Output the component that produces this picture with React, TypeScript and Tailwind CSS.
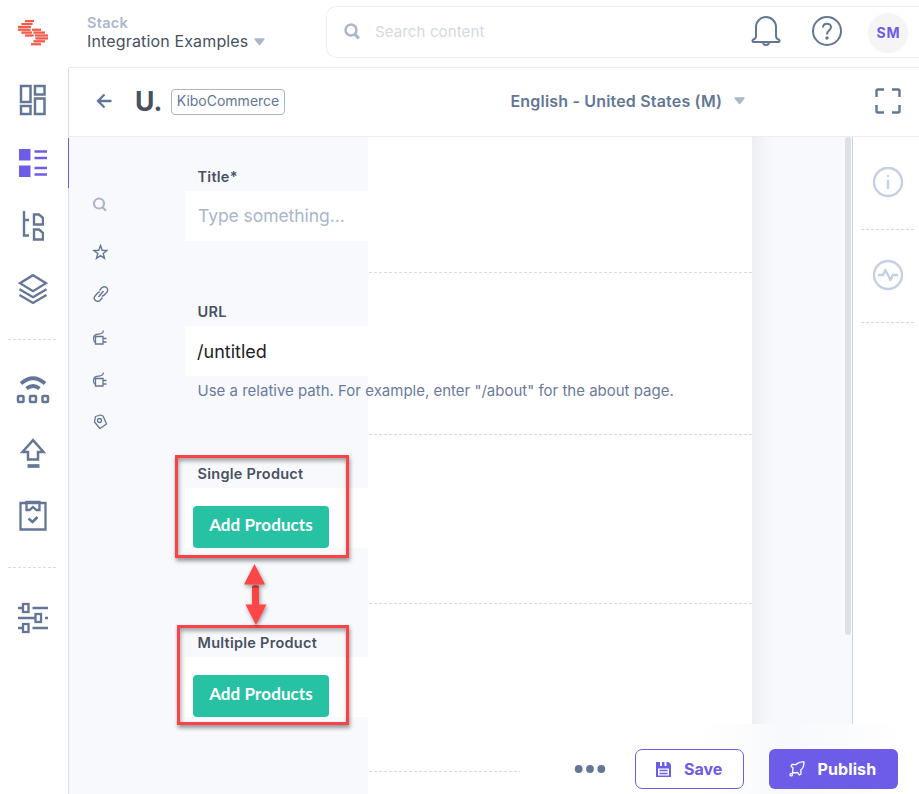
import React from 'react';

type IconProps = { w: number; h: number; className?: string; children: React.ReactNode; sw?: number };

function Icon({ w, h, className = '', children, sw = 2 }: IconProps) {
  return (
    <svg
      width={w}
      height={h}
      viewBox={`0 0 ${w} ${h}`}
      fill="none"
      stroke="currentColor"
      strokeWidth={sw}
      className={`shrink-0 ${className}`}
    >
      {children}
    </svg>
  );
}

function Logo() {
  const bars: [number, number, number][] = [
    [7, 16, 0], [3.5, 14.5, 3], [0, 13, 6], [0, 12.5, 8.8], [14, 23, 8.8], [3.5, 14, 11.6], [15.5, 27, 11.6],
    [7, 15.500, 14.5], [17, 30, 14.5], [17.500, 30, 17.4], [15.500, 27, 20.3], [13, 23, 23.2],
  ];
  return (
    <svg width="31" height="27" viewBox="0 0 31 27" className="shrink-0">
      {bars.map(([a, b, y]) => (
        <g key={`${a}-${y}`} fill="#f0503f">
          <rect x={a} y={y - 0.3} width={b - a} height="2.700" opacity="0.35" />
          <rect x={a} y={y} width={b - a} height="2" opacity="0.9" />
        </g>
      ))}
    </svg>
  );
}

function Caret({ className = '' }: { className?: string }) {
  return (
    <svg width="11" height="8" viewBox="0 0 11 8" className={className}>
      <path d="M1.2 1h8.6L5.500 6.500z" fill="#a9b6cb" stroke="#a9b6cb" strokeWidth="1.600" strokeLinejoin="round" />
    </svg>
  );
}

function Dashes({ className = '' }: { className?: string }) {
  return (
    <div
      className={`h-px shrink-0 bg-[repeating-linear-gradient(90deg,#d9dadf_0_3px,transparent_3px_5px)] ${className}`}
    />
  );
}

function Sidebar() {
  return (
    <nav className="flex h-full w-[68px] shrink-0 flex-col items-center pr-[2px] text-[#647696]">
      <div className="mt-[19.600px] h-[26.400px]"><Logo /></div>
      <Icon w={28} h={32} sw={2.500} className="mt-[38px]">
        <rect x="2" y="2" width="9.500" height="16" />
        <rect x="16" y="2" width="9.500" height="8.500" />
        <rect x="2" y="22" width="9.500" height="8" />
        <rect x="16" y="14.500" width="9.500" height="15.500" />
      </Icon>
      <Icon w={28} h={28} className="mt-[33px] text-[#6c5ce7]">
        <path d="M0 0h11.500v11.500H0zM0 16.500h11.500V28H0z" fill="currentColor" stroke="none" />
        <path d="M15.500 2.500H28M15.500 9H28M15.500 19H28M15.500 25.500H28" strokeWidth="2.300" />
      </Icon>
      <Icon w={22} h={32} sw={2.400} className="mt-[33px]">
        <path d="M2 1v24.500h5M2 10h5" />
        <path d="M12 4.500h5l4 3.500v6.500h-9zM12 19.500h5l4 3.500v6.500h-9z" />
      </Icon>
      <Icon w={30} h={32} sw={2.300} className="mt-[31px]">
        <path d="M15 2.200l13 8-13 8-13-8zM1.500 16.200L15 24.200l13.500-8M1.500 22L15 30l13.500-8" />
      </Icon>
      <Dashes className="mt-[34px] w-[50px]" />
      <Icon w={34} h={30} sw={2.500} className="mt-[35px]">
        <path d="M5 8.500Q17-2 29 8.500" strokeWidth="3.700" />
        <path d="M10.500 13.500Q17 8.500 23.500 13.500" strokeWidth="3.700" />
        <rect x="2" y="21" width="5.500" height="6" rx="1" />
        <rect x="14" y="21" width="6" height="6" rx="1" />
        <rect x="26.500" y="21" width="5.500" height="6" rx="1" />
      </Icon>
      <Icon w={26} h={30} sw={2.500} className="mt-[33px]">
        <path d="M13 2.200L23.500 14H18v7.500H8V14H2.500z" />
        <path d="M7.500 28h12" strokeWidth="3.700" />
      </Icon>
      <Icon w={28} h={32} sw={2.300} className="mt-[32px]">
        <path d="M1.500 3h25v26.500h-25z" />
        <path d="M7.500 2h13v8h-3l-3.500-3-3.500 3h-3z" />
        <path d="M9.500 18.500l4 3.500 5-5" strokeWidth="2.600" />
      </Icon>
      <Dashes className="mt-[35px] w-[50px]" />
      <Icon w={30} h={32} sw={2.300} className="mt-[34px]">
        <path d="M0 6h4M14.500 6H30M0 16h17M27 16h3M0 26h4M14.500 26H30" />
        <rect x="5" y="2" width="5.500" height="8" />
        <rect x="17.500" y="12" width="5.500" height="8" />
        <rect x="5" y="22" width="5.500" height="8" />
      </Icon>
    </nav>
  );
}

function TopBar() {
  return (
    <header className="flex h-[67px] shrink-0 pl-[19px]">
      <div className="w-[239px] pt-[14px]">
        <div className="text-[14.5px] leading-[18px] font-semibold tracking-[0.3px] text-[#a9b6d0]">Stack</div>
        <div className="flex items-center gap-[6px] leading-[19px]">
          <span className="text-[16px] tracking-[0.15px] text-[#475161]">Integration Examples</span>
          <Caret />
        </div>
      </div>
      <div className="mt-[6px] flex h-[52px] flex-1 items-center rounded-l-[10px] border border-r-0 border-[#edf0f9] pl-[17px]">
        <Icon w={16} h={17} sw={2.500} className="mb-px text-[#a9b6cb]">
          <circle cx="7" cy="7" r="5.500" />
          <path d="M10.800 11l4 4.500" strokeWidth="3" />
        </Icon>
        <span className="ml-[15px] w-[376px] text-[15px] tracking-[0.13px] text-[#d4d9e1]">Search content</span>
        <Icon w={30} h={32} className="text-[#647696]">
          <path d="M5 20V11a10 10 0 0 1 20 0v9c0 2 1 3 2.500 3.500 1.500.7 1.500 2.500-.5 2.500H3c-2 0-2-1.800-.5-2.500C4 23 5 22 5 20z" />
          <path d="M12 26c0 4 6 4 6 0" />
        </Icon>
        <Icon w={32} h={32} className="mb-[2px] ml-[30px] text-[#647696]">
          <circle cx="16" cy="16" r="14" />
          <path d="M12 12.500c0-5 8-5 8-.5 0 3.500-4 3-4 7.500" />
          <circle cx="16" cy="23" r="1.700" fill="currentColor" stroke="none" />
        </Icon>
        <div className="mt-[2px] ml-[25px] flex size-10 shrink-0 items-center justify-center rounded-full bg-[#f5f5f5] pb-[2px] pl-px text-[14px] font-bold tracking-[0.8px] text-[#6c5ce7]">
          SM
        </div>
      </div>
    </header>
  );
}

function EntryBar() {
  return (
    <div className="flex h-[69px] shrink-0 items-center border-b border-[#eaedf6] pb-[2px] pl-[27px]">
      <Icon w={16} h={16} sw={2.300} className="text-[#647696]">
        <path d="M8.500 1.500L2 8l6.500 6.500M2 8h13.500" />
      </Icon>
      <span className="mt-[2px] ml-[23px] w-[36px] text-[26.5px] font-bold text-[#475161]">U.</span>
      <span className="mt-px flex h-[26px] w-[114px] shrink-0 items-center justify-center rounded-[4px] border border-[#a9b6cb] pb-[2px] text-[14px] text-[#647696]">
        KiboCommerce
      </span>
      <span className="ml-[225.500px] w-[223.500px] text-[16px] font-semibold tracking-[0.18px] whitespace-nowrap text-[#647696]">
        English - United States (M)
      </span>
      <Caret />
      <Icon w={26} h={26} sw={2.400} className="ml-[130px] text-[#647696]">
        <path d="M1.500 9V3q0-1.500 1.500-1.500h6M17 1.500h6q1.500 0 1.500 1.500v6M24.500 17v6q0 1.500-1.500 1.500h-6M9 24.500H3q-1.500 0-1.500-1.500v-6" />
      </Icon>
    </div>
  );
}

function Plug({ className }: { className: string }) {
  return (
    <Icon w={16} h={16} sw={1.300} className={className}>
      <path d="M3.500 6.500h7.500v7.500H3.500zM11 8.500h3.500M11 12h3.500M3.500 13C.5 11 1 5.500 4 4.500c3-.8 7 .5 7.500-4" />
    </Icon>
  );
}

function FieldRail() {
  return (
    <div className="flex w-[116px] shrink-0 flex-col pl-[23px] text-[#647696]">
      <Icon w={15} h={15} sw={2.200} className="mt-[60px] text-[#a9b6cb]">
        <circle cx="7" cy="6.500" r="5" />
        <path d="M10.500 10.200l3.500 3.500" />
      </Icon>
      <Icon w={16} h={16} sw={1.400} className="mt-[32px]">
        <path d="M8.500 1.500l1.700 4.800 4.800.2-3.800 3 1.300 4.800-4-2.700-4 2.700 1.300-4.800-3.800-3 4.800-.2z" />
      </Icon>
      <Icon w={18} h={18} sw={1.400} className="mt-[25px]">
        <path d="M7.500 5.500l2.300-2.700a3.300 3.300 0 0 1 5 4.500L12.300 10a3 3 0 0 1-2.600 1M10.500 12.500l-2.300 2.700a3.300 3.300 0 0 1-5-4.500L5.700 8a3 3 0 0 1 2-1M6.500 12l5-6" />
      </Icon>
      <Plug className="mt-[27px]" />
      <Plug className="mt-[26px]" />
      <Icon w={16} h={16} sw={1.300} className="mt-[26px] ml-px">
        <path d="M2.500 2.500l5-1.500 2.500 1 3.500 8-6.500 4.500L1.500 8z" strokeLinejoin="round" />
        <circle cx="6.500" cy="6.500" r="2" />
      </Icon>
    </div>
  );
}

function Field({
  label, top, height, boxHeight, boxClass = '', note, children,
}: {
  label: string; top: string; height: string; boxHeight: string; boxClass?: string; note?: string; children: React.ReactNode;
}) {
  return (
    <div className={`flex shrink-0 ${height}`}>
      <div className={`w-[183px] shrink-0 ${top}`}>
        <div className="h-[26px] pl-[12.500px] text-[14.5px] leading-[23px] font-semibold tracking-[0.26px] text-[#475161]">{label}</div>
        <div className={`bg-white ${boxHeight} ${boxClass}`}>{children}</div>
        {note && (
          <div className="relative z-10 mt-[5px] pl-[12.500px] text-[15px] leading-[20px] whitespace-nowrap text-[#6b7b9d]">{note}</div>
        )}
      </div>
      <div className="flex flex-1 items-end bg-white pl-px"><Dashes className="w-full" /></div>
    </div>
  );
}

function AddButton() {
  return (
    <button className="h-[42px] w-[136px] rounded-[4px] bg-[#27c2a4] pb-[4px] font-[Lato,sans-serif] text-[17px] font-bold tracking-[0.1px] text-white">
      Add Products
    </button>
  );
}

function Editor() {
  return (
    <div className="flex w-[783px] shrink-0 overflow-hidden bg-[#f7f9fd]">
      <FieldRail />
      <div className="flex w-[567px] shrink-0 flex-col">
        <Field label="Title*" top="pt-[28px]" height="h-[136px]" boxHeight="h-[50px]" boxClass="flex items-center pl-[13px] text-[17.5px] tracking-[-0.06px] text-[#a9b6cb]">
          Type something...
        </Field>
        <Field label="URL" top="pt-[27px]" height="h-[162px]" boxHeight="h-[50px]" boxClass="flex items-center pl-[12px] pt-px text-[18px] text-[#222222]"
          note={'Use a relative path. For example, enter "/about" for the about page.'}>
          /untitled
        </Field>
        <Field label="Single Product" top="pt-[27px]" height="h-[169px]" boxHeight="h-[60px]" boxClass="pl-2 pt-[18px]"><AddButton /></Field>
        <Field label="Multiple Product" top="pt-[27px]" height="h-[168px]" boxHeight="h-[60px]" boxClass="pl-2 pt-[18px]"><AddButton /></Field>
        <div className="flex-1 pl-[183px]"><div className="h-full bg-white" /></div>
      </div>
      <div className="flex flex-1 justify-between bg-linear-to-r from-[#edeff3] via-[#f7f9fd] via-20% to-[#f7f9fd] pr-px">
        <div />
        <div className="h-[498px] w-[6px] rounded-full bg-[#dde0e7]" />
      </div>
    </div>
  );
}

function InfoPanel() {
  return (
    <aside className="flex flex-1 flex-col items-center border-l border-[#cbd3e2] text-[#c3cfe2]">
      <Icon w={32} h={32} sw={2.300} className="mt-[29px] ml-[4px]">
        <circle cx="16" cy="16" r="14" />
        <path d="M16 14v9M16 9v2" />
      </Icon>
      <Dashes className="mt-[31px] ml-[5px] w-[55px]" />
      <Icon w={32} h={32} sw={2.300} className="mt-[29px] ml-[4px]">
        <circle cx="16" cy="16" r="14" />
        <path d="M6 16h5l2.500-5 5 10 2.500-5h5" strokeLinejoin="round" />
      </Icon>
      <Dashes className="mt-[31px] ml-[5px] w-[55px]" />
    </aside>
  );
}

function Actions() {
  return (
    <div className="absolute right-0 bottom-0 z-20 flex h-[70px] w-[399px] bg-white bg-[linear-gradient(90deg,#ffffff_45%,#f8f9fc_66%,#fafbfd_80%,#ffffff_96%)] pt-[25px] pl-[54px]">
      <svg width="32" height="40" viewBox="0 0 32 40" fill="#647696" className="shrink-0">
        <circle cx="4.700" cy="20" r="3.900" />
        <circle cx="16" cy="20" r="3.900" />
        <circle cx="27.300" cy="20" r="3.900" />
      </svg>
      <button className="ml-[29px] flex h-10 w-[109px] shrink-0 items-center rounded-[7px] border border-[#6c5ce7] bg-white pl-[20px] text-[16px] font-bold text-[#6c5ce7]">
        <svg width="15" height="15" viewBox="0 0 15 15" className="mr-[13px]">
          <path d="M0 0h12.500L15 2.500V15H0z" fill="#6c5ce7" />
          <path d="M4 0h2v4H4zM8.500 0h2v4h-2z" fill="#fff" />
          <path d="M2 6.500h11v7H2z" fill="#fff" />
          <path d="M3.500 8.500h8M3.500 11.500h8" stroke="#6c5ce7" strokeWidth="1.300" />
        </svg>
        Save
      </button>
      <button className="ml-[25px] flex h-10 w-[129px] shrink-0 items-center rounded-[6px] bg-[#6c5ce7] pl-[20px] text-[16px] font-bold text-white">
        <Icon w={16} h={16} sw={1.300} className="mr-[12.500px]">
          <path d="M15 1c-4-.3-6.500.7-8.300 2.700L3 3.300 2 5l2 2-.5 5 5-.5 2 2.500 1.500-1-.2-4C14 7.500 15 5 15 1z" strokeLinejoin="round" />
          <circle cx="2.200" cy="13.700" r="1.200" />
        </Icon>
        <span className="tracking-[0.1px]">Publish</span>
      </button>
    </div>
  );
}

function Annotations() {
  return (
    <>
      <div className="absolute top-[455px] left-[175px] z-20 h-[103px] w-[174px] border-[3px] border-[#f94344] shadow-[1px_3px_4px_rgba(0,0,0,0.4),inset_1px_3px_4px_rgba(0,0,0,0.35)]" />
      <div className="absolute top-[625px] left-[177px] z-20 h-[100px] w-[172px] border-[3px] border-[#f94344] shadow-[1px_3px_4px_rgba(0,0,0,0.4),inset_1px_3px_4px_rgba(0,0,0,0.35)]" />
      <svg width="32" height="68" viewBox="0 0 32 68" className="absolute top-[562px] left-[240px] z-20 drop-shadow-[1px_2px_2px_rgba(0,0,0,0.4)]">
        <path d="M12 24h7v22h-7z" fill="#f94344" />
        <path d="M12 25q0-2 3.500-2t3.500 2v1h-7z" fill="#c23336" />
        <path d="M14.500 2L25 22.500H4zM5.500 42.500h21L16 63z" fill="#ff4546" />
      </svg>
    </>
  );
}

export default function App() {
  return (
    <div className="relative flex h-[794px] w-[919px] overflow-hidden bg-white font-[Inter,sans-serif]">
      <Sidebar />
      <div className="flex min-w-0 flex-1 flex-col">
        <TopBar />
        <main className="flex min-h-0 flex-1 border-t border-[#e9ecf6]">
          <div className="flex w-px shrink-0 flex-col bg-[#d8dfee]">
            <div className="mt-[70px] h-[50px] bg-[#6c5ce7]" />
          </div>
          <div className="flex min-w-0 flex-1 flex-col">
            <EntryBar />
            <div className="flex min-h-0 flex-1">
              <Editor />
              <InfoPanel />
            </div>
          </div>
        </main>
      </div>
      <Annotations />
      <Actions />
    </div>
  );
}
